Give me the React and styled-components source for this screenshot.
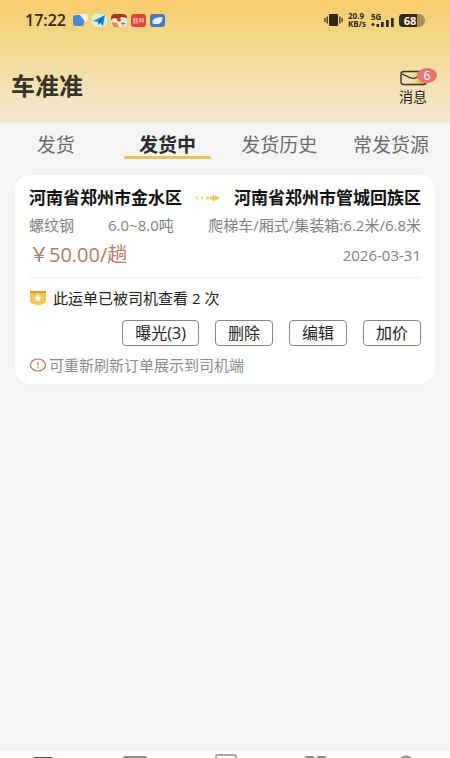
import React, { useState } from 'react';
import styled, { createGlobalStyle } from 'styled-components';

const COLORS = {
  page_bg: '#f5f5f5',
  ink: '#33291a',
  text: '#222222',
  muted: '#808080',
  accent: '#e6c463',
  price: '#b07c68',
  badge: '#e6757a',
};

const TABS = ['发货', '发货中', '发货历史', '常发货源'];

const ORDER = {
  from: '河南省郑州市金水区',
  to: '河南省郑州市管城回族区',
  goods: '螺纹钢',
  weight: '6.0~8.0吨',
  truck: '爬梯车/厢式/集装箱:6.2米/6.8米',
  price: '￥50.00/趟',
  date: '2026-03-31',
  views: 2,
  actions: ['曝光(3)', '删除', '编辑', '加价'],
};

const StatusBar = () => (
  <Status>
    <Clock>17:22</Clock>
    <AppIcons>
      <svg width="15" height="13" viewBox="0 0 15 13">
        <rect x="5" y="0" width="10" height="7" rx="3" fill="#fbf3dd" />
        <path d="M0 4Q0 1 4 1H7L11 6V9Q11 12 8 12H3Q0 12 0 9Z" fill="#4a8ad8" />
      </svg>
      <svg width="15" height="13" viewBox="0 0 15 13">
        <rect width="15" height="13" rx="5" fill="#d5efe9" />
        <path d="M1 7L13 1L11 12L8 9L6 11L6 8Z" fill="#1f87cf" />
        <path d="M6 8L12 2L8 9Z" fill="#1664a8" />
      </svg>
      <svg width="16" height="13" viewBox="0 0 16 13">
        <rect width="16" height="13" rx="4" fill="#f4e8da" />
        <path d="M0 4Q0 0 4 0H12Q16 0 16 4L11 3L7 5L3 4L0 6Z" fill="#a83523" />
        <path d="M1 8L6 9L8 13H4Q1 13 1 8Z" fill="#e79032" />
        <ellipse cx="8" cy="6" rx="2" ry="1.4" fill="#d33c31" />
        <path d="M10 9.5H14.5M12 8V12" stroke="#9b6672" strokeWidth="0.8" />
      </svg>
      <svg width="15" height="13" viewBox="0 0 15 13">
        <rect width="15" height="13" rx="3" fill="#df4339" />
        <path d="M2 5H7M2 7H7M2 9H7M3 4V9M6 4V9M8 5H13M8 7H13M9 4V9M12 4V9" stroke="#f6c9c0" strokeWidth="0.8" />
      </svg>
      <svg width="15" height="13" viewBox="0 0 15 13">
        <rect width="15" height="13" rx="3" fill="#4477bb" />
        <path d="M2.5 7Q4 3 12.5 3Q13 8 9 10H4Q2 10 2.5 7Z" fill="#e3f3fb" />
      </svg>
    </AppIcons>
    <SystemIcons>
      <svg width="19" height="14" viewBox="0 0 19 14">
        <rect x="5" y="1" width="9" height="12" rx="1" fill={COLORS.ink} />
        <path d="M1 5V9M3.2 3.5V10.5M15.8 3.5V10.5M18 5V9" stroke={COLORS.ink} strokeWidth="1.2" />
      </svg>
      <NetSpeed>
        <span>20.9</span>
        <span>KB/s</span>
      </NetSpeed>
      <Signal>
        <span>5G</span>
        <svg width="23" height="14" viewBox="0 0 23 14">
          <circle cx="2" cy="11.5" r="1.6" fill={COLORS.ink} />
          <path d="M5.5 11H8.2V14H5.5ZM10 9H12.7V14H10ZM15 7H17.7V14H15ZM20 5H22.7V14H20Z" fill={COLORS.ink} />
        </svg>
      </Signal>
      <Battery>
        <span>68</span>
      </Battery>
    </SystemIcons>
  </Status>
);

const MessageButton = ({ count }) => (
  <Message type="button">
    <svg width="27" height="16" viewBox="0 0 27 16">
      <defs>
        <linearGradient id="mail">
          <stop offset="0.2" stopColor="#f8d98b" stopOpacity="0" />
          <stop offset="0.8" stopColor="#f2b335" />
        </linearGradient>
      </defs>
      <rect x="7" y="2" width="18" height="12" fill="url(#mail)" />
      <rect x="1" y="1.5" width="25" height="13" rx="2.5" fill="none" stroke="#3a3329" strokeWidth="1.4" />
      <path d="M2 4L10 7.6Q13 9 16 7.6L25 4" fill="none" stroke="#3a3329" strokeWidth="1.3" />
    </svg>
    消息
    <Badge>{count}</Badge>
  </Message>
);

const OrderCard = ({ order }) => (
  <Card>
    <Route>
      <span>{order.from}</span>
      <svg width="26" height="10" viewBox="0 0 26 10">
        <path d="M1 3.5H3V6.5H1ZM6 3.5H8V6.5H6ZM11 3.5H14V6.5H11Z" fill="#f0d384" />
        <path d="M15 3.5H18V1.5L25 5L18 8.5V6.5H15Z" fill="#eec45b" />
      </svg>
      <span>{order.to}</span>
    </Route>
    <Details>
      <span>{order.goods}</span>
      <span>{order.weight}</span>
      <Truck>{order.truck}</Truck>
    </Details>
    <PriceRow>
      <Price>{order.price}</Price>
      <time>{order.date}</time>
    </PriceRow>
    <Notice>
      <svg width="18" height="16" viewBox="0 0 18 16">
        <path d="M1 1H17V11Q17 13 14 14L9 15.5L4 14Q1 13 1 11Z" fill="#f3c653" />
        <path d="M1 1H17V3H1Z" fill="#d99a3c" />
        <path d="M9 4L10.2 6.7L13 7L10.9 8.8L11.5 11.6L9 10.2L6.5 11.6L7.1 8.8L5 7L7.8 6.7Z" fill="#fffbe8" />
      </svg>
      <span>此运单已被司机查看 {order.views} 次</span>
    </Notice>
    <Actions>
      {order.actions.map((action) => (
        <ActionButton type="button" key={action}>{action}</ActionButton>
      ))}
    </Actions>
    <Hint>
      <svg width="18" height="14" viewBox="0 0 18 14">
        <ellipse cx="9" cy="7" rx="7.5" ry="6" fill="none" stroke="#b5775c" strokeWidth="1.2" />
        <path d="M9 3.8V7.6M9 8.8V10.2" stroke="#b5775c" strokeWidth="1.3" />
      </svg>
      <span>可重新刷新订单展示到司机端</span>
    </Hint>
  </Card>
);

const BottomNav = () => (
  <Nav>
    <NavButton type="button" aria-label="发货">
      <svg width="24" height="24" viewBox="0 0 24 24"><rect x="0" y="3" width="20" height="18" rx="2" fill="#5c4b44" /></svg>
    </NavButton>
    <NavButton type="button" aria-label="订单">
      <svg width="24" height="24" viewBox="0 0 24 24"><rect x="1" y="3" width="22" height="18" rx="1" fill="none" stroke="#8c8c8c" strokeWidth="2" /></svg>
    </NavButton>
    <NavButton type="button" aria-label="货源">
      <svg width="24" height="24" viewBox="0 0 24 24"><rect x="3" y="1" width="20" height="21" rx="1" fill="none" stroke="#8c8c8c" strokeWidth="1.5" /></svg>
    </NavButton>
    <NavButton type="button" aria-label="服务">
      <svg width="24" height="24" viewBox="0 0 24 24">
        <rect x="2" y="3" width="9" height="8" rx="2" fill="none" stroke="#8c8c8c" strokeWidth="2" />
        <rect x="14" y="3" width="9" height="8" rx="2" fill="none" stroke="#8c8c8c" strokeWidth="2" />
      </svg>
    </NavButton>
    <NavButton type="button" aria-label="我的">
      <svg width="24" height="24" viewBox="0 0 24 24"><ellipse cx="13" cy="7" rx="6" ry="4.5" fill="none" stroke="#8c8c8c" strokeWidth="2" /></svg>
    </NavButton>
  </Nav>
);

const App = () => {
  const [activeTab, setActiveTab] = useState('发货中');

  return (
    <Page>
      <GlobalStyle />
      <Header>
        <StatusBar />
        <TitleRow>
          <Brand>车准准</Brand>
          <MessageButton count={6} />
        </TitleRow>
      </Header>
      <Tabs>
        {TABS.map((tab) => (
          <Tab type="button" key={tab} $active={tab === activeTab} onClick={() => setActiveTab(tab)}>
            {tab}
          </Tab>
        ))}
      </Tabs>
      <Content>
        <OrderCard order={ORDER} />
      </Content>
      <BottomNav />
    </Page>
  );
};

const GlobalStyle = createGlobalStyle`
  * {
    box-sizing: border-box;
  }

  body {
    margin: 0;
    font-family: "Open Sans", "Noto Sans CJK SC", sans-serif;
    color: ${COLORS.text};
  }

  button {
    font: inherit;
    color: inherit;
    background: none;
    border: none;
    padding: 0;
    cursor: pointer;
  }

  svg {
    display: block;
    flex: none;
  }
`;

const Page = styled.div`
  display: flex;
  flex-direction: column;
  height: 100vh;
  overflow: hidden;
  background-color: ${COLORS.page_bg};
`;

const Header = styled.header`
  padding-bottom: 17px;
  background: linear-gradient(#f6cd6c, #f4dda3 55%, #f5e8d4);
`;

const Status = styled.div`
  display: flex;
  align-items: center;
  height: 40px;
  padding: 0 25px;
  color: ${COLORS.ink};
`;

const Clock = styled.span`
  font-size: 16px;
  font-weight: 600;
  line-height: 20px;
`;

const AppIcons = styled.div`
  display: flex;
  gap: 4px;
  margin-left: 7px;
`;

const SystemIcons = styled.div`
  display: flex;
  align-items: center;
  gap: 5px;
  margin-left: auto;
`;

const NetSpeed = styled.div`
  display: flex;
  flex-direction: column;
  font-size: 8px;
  font-weight: 700;
  line-height: 8px;
`;

const Signal = styled.div`
  display: grid;
  font-size: 8px;
  font-weight: 700;
  line-height: 8px;

  > * {
    grid-area: 1 / 1;
  }
`;

const Battery = styled.div`
  width: 26px;
  padding-right: 4px;
  border-radius: 4px 6px 6px 4px;
  background: linear-gradient(90deg, ${COLORS.ink} 68%, #a98f52 68%);
  color: #fff6dc;
  font-size: 11px;
  font-weight: 700;
  line-height: 13px;
  text-align: center;
`;

const TitleRow = styled.div`
  display: flex;
  justify-content: space-between;
  align-items: flex-end;
  height: 66px;
  padding: 0 23px 0 11px;
`;

const Brand = styled.h1`
  margin: 0;
  font-size: 24px;
  font-weight: 700;
  line-height: 40px;
  color: #3a3329;
`;

const Message = styled.button`
  position: relative;
  display: flex;
  flex-direction: column;
  align-items: center;
  gap: 2px;
  font-size: 14px;
  line-height: 18px;
`;

const Badge = styled.span`
  position: absolute;
  top: -2px;
  right: -10px;
  width: 20px;
  border-radius: 50%;
  background-color: ${COLORS.badge};
  color: white;
  font-size: 12px;
  line-height: 15px;
  text-align: center;
`;

const Tabs = styled.nav`
  display: flex;
  padding: 11px 3px 0 0;
`;

const Tab = styled.button`
  flex: 1;
  display: flex;
  flex-direction: column;
  align-items: center;
  font-size: 19px;
  line-height: 22px;
  color: ${(props) => (props.$active ? '#2b2b2b' : '#6b6b6b')};
  font-weight: ${(props) => (props.$active ? 700 : 400)};

  &::after {
    content: '';
    width: 78%;
    height: 3px;
    border-radius: 2px;
    background-color: ${(props) => (props.$active ? COLORS.accent : 'transparent')};
  }
`;

const Content = styled.main`
  flex: 1;
  min-height: 0;
  padding: 16px 15px;
`;

const Card = styled.article`
  padding: 12px 14px 8px;
  border-radius: 16px;
  background-color: white;
  box-shadow: 0 2px 8px rgba(0, 0, 0, 0.02);
  font-size: 15px;
  line-height: 22px;
`;

const Route = styled.h2`
  display: flex;
  justify-content: space-between;
  align-items: center;
  margin: 0;
  font-size: 17px;
  font-weight: 700;
  line-height: 22px;
  color: #111111;
  white-space: nowrap;
`;

const Details = styled.div`
  display: flex;
  gap: 34px;
  margin-top: 5px;
  color: ${COLORS.muted};
  white-space: nowrap;
`;

const Truck = styled.span`
  margin-left: auto;
`;

const PriceRow = styled.div`
  display: flex;
  justify-content: space-between;
  align-items: center;
  padding: 5px 0 8px;
  border-bottom: 1px solid #eeeeee;
  color: ${COLORS.muted};
`;

const Price = styled.span`
  font-size: 20px;
  line-height: 28px;
  color: ${COLORS.price};
`;

const Notice = styled.div`
  display: flex;
  align-items: center;
  gap: 6px;
  margin-top: 9px;
`;

const Actions = styled.div`
  display: flex;
  justify-content: flex-end;
  gap: 16px;
  margin-top: 11px;
`;

const ActionButton = styled.button`
  && {
    padding: 0 12px;
    border: 1px solid #858585;
    border-radius: 4px;
    font-size: 16px;
    line-height: 24px;
  }
`;

const Hint = styled.div`
  display: flex;
  align-items: center;
  gap: 2px;
  margin-top: 8px;
  color: #8c8c8c;
`;

const Nav = styled.nav`
  flex: 0 0 7px;
  display: flex;
  align-items: flex-start;
  padding-top: 3px;
  overflow: hidden;
  background-color: white;
`;

const NavButton = styled.button`
  flex: 1;
  display: flex;
  justify-content: center;
`;

export default App;
